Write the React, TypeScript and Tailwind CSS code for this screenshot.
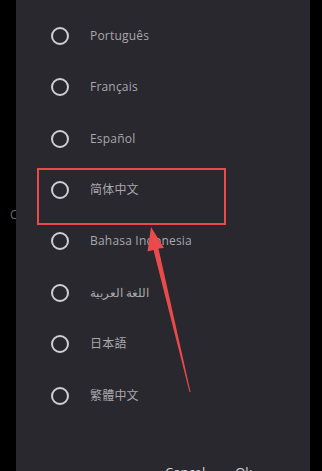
import React from 'react';

const languages = [
  'Português',
  'Français',
  'Español',
  '简体中文',
  'Bahasa Indonesia',
  'اللغة العربية',
  '日本語',
  '繁體中文'
];

const font = { fontFamily: '"Open Sans", "Noto Sans CJK SC", "Noto Sans", sans-serif' };

function Radio() {
  return <div className="w-[18px] h-[18px] rounded-full border-2 border-[#cfced3] shrink-0" />;
}

export default function App() {
  return (
    <div className="relative w-[322px] h-[471px] bg-black overflow-hidden flex" style={font}>
      {/* background content peeking at the left edge */}
      <div className="w-[16px] shrink-0 relative overflow-hidden">
        <span className="absolute left-[10px] top-[209px] text-[12px] text-[#6d6c70] leading-none">C</span>
      </div>

      <div className="w-[294px] shrink-0 bg-[#29282e] flex flex-col pt-[10px]">
        {languages.map((lang) => (
          <div key={lang} className="h-[51.43px] shrink-0 flex items-center pl-[35px] gap-[21px]">
            <Radio />
            <span className="text-[12px] text-[#a8a7ac] tracking-[0.2px]">{lang}</span>
          </div>
        ))}
        <div className="flex shrink-0 gap-[30px] pl-[149px] pt-[42px]">
          <span className="text-[13px] text-[#d5d4d8]">Cancel</span>
          <span className="text-[13px] text-[#d5d4d8]">Ok</span>
        </div>
      </div>

      {/* annotation: highlight box */}
      <div className="absolute left-[37px] top-[168px] w-[189px] h-[57px] border-2 border-[#ea4a4c]" />

      {/* annotation: arrow */}
      <svg className="absolute left-0 top-0" width="322" height="471" viewBox="0 0 322 471">
        <polygon
          points="151,227 164,248 158.5,248.5 190.5,392 189.5,392 153.5,250 147.5,251.5"
          fill="#ea4a4c"
        />
      </svg>
    </div>
  );
}
